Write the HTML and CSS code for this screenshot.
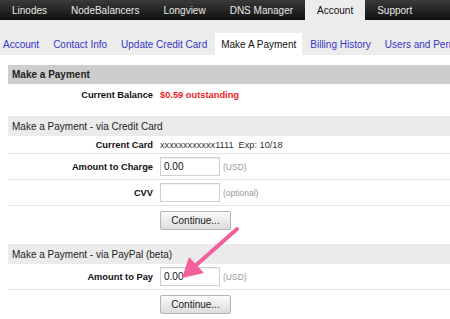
FILE: index.html
```html
<!DOCTYPE html>
<html lang="en">
  <head>
    <meta charset="utf-8" />
    <meta name="viewport" content="width=device-width, initial-scale=1" />
    <title>Make A Payment</title>
    <link rel="stylesheet" href="styles.css">
  </head>
  <body>
    <!-- Main navigation -->
    <nav class="topnav">
      <a class="topnav-item" href="#">Linodes</a>
      <a class="topnav-item" href="#">NodeBalancers</a>
      <a class="topnav-item" href="#">Longview</a>
      <a class="topnav-item" href="#">DNS Manager</a>
      <a class="topnav-item active" href="#">Account</a>
      <a class="topnav-item" href="#">Support</a>
    </nav>

    <!-- Account sub navigation -->
    <nav class="subnav">
      <a class="subnav-item" href="#">Account</a>
      <a class="subnav-item" href="#">Contact Info</a>
      <a class="subnav-item" href="#">Update Credit Card</a>
      <a class="subnav-item active" href="#">Make A Payment</a>
      <a class="subnav-item" href="#">Billing History</a>
      <a class="subnav-item" href="#">Users and Permissions</a>
    </nav>

    <main class="content">
      <section class="panel">
        <h2 class="panel-title main">Make a Payment</h2>
        <div class="row plain balance-row">
          <span class="label">Current Balance</span>
          <span class="balance">$0.59 outstanding</span>
        </div>
      </section>

      <section class="panel">
        <h2 class="panel-title">Make a Payment - via Credit Card</h2>
        <div class="row short">
          <span class="label">Current Card</span>
          <span class="card">xxxxxxxxxxxx1111&nbsp; Exp: 10/18</span>
        </div>
        <div class="row">
          <span class="label">Amount to Charge</span>
          <input class="field" type="text" value="0.00" />
          <span class="hint">(USD)</span>
        </div>
        <div class="row">
          <span class="label">CVV</span>
          <input class="field" type="text" value="" />
          <span class="hint">(optional)</span>
        </div>
        <div class="row plain actions">
          <span class="label"></span>
          <button class="btn" type="button">Continue...</button>
        </div>
      </section>

      <section class="panel">
        <h2 class="panel-title">Make a Payment - via PayPal (beta)</h2>
        <div class="row">
          <span class="label">Amount to Pay</span>
          <input class="field" type="text" value="0.00" />
          <span class="hint">(USD)</span>
        </div>
        <div class="row plain actions">
          <span class="label"></span>
          <button class="btn" type="button">Continue...</button>
        </div>
      </section>
    </main>

    <!-- Annotation arrow -->
    <svg class="annotation" width="450" height="319" viewBox="0 0 450 319">
      <line x1="237" y1="229" x2="194" y2="267" stroke="#f2609c" stroke-width="4" stroke-linecap="round" />
      <polygon points="182,278 189,257 204,273" fill="#f2609c" />
    </svg>
  </body>
</html>
```

FILE: styles.css
```css
:root {
  --font: "Liberation Sans", Arial, Helvetica, sans-serif;
  --link: #3535c8;
  --tab-bg: #ececec;
  --line: #e4e4e4;
}

*,
*::before,
*::after {
  margin: 0;
  padding: 0;
  box-sizing: border-box;
}

body {
  position: relative;
  font-family: var(--font);
  font-size: 10px;
  color: #222;
  background: #fff;
  overflow: hidden;
}

/* top bar */
.topnav {
  display: flex;
  height: 20px;
  background: linear-gradient(#3a3a3a, #101010);
  white-space: nowrap;
}

.topnav-item {
  display: flex;
  align-items: center;
  padding: 0 12px;
  color: #e8e8e8;
  text-decoration: none;
  font-size: 10px;
}

.topnav-item.active {
  background: var(--tab-bg);
  color: #111;
}

/* sub navigation */
.subnav {
  display: flex;
  align-items: flex-end;
  height: 35px;
  margin-left: -4px;
  background: var(--tab-bg);
  white-space: nowrap;
  overflow: hidden;
}

.subnav-item {
  display: flex;
  align-items: center;
  height: 22px;
  padding: 0 7px;
  color: var(--link);
  text-decoration: none;
  font-size: 10px;
}

.subnav-item.active {
  background: #fff;
  color: #111;
  padding: 0 6px;
  margin: 0 1px;
}

/* payment panels */
.content {
  padding: 10px 0 0 8px;
}

.panel {
  margin-bottom: 10px;
}

.panel-title {
  height: 20px;
  padding-left: 4px;
  display: flex;
  align-items: center;
  background: #ebebeb;
  font-size: 10px;
  font-weight: normal;
  color: #222;
}

.panel-title.main {
  height: 19px;
  background: #cdcdcd;
  font-weight: bold;
}

.row {
  display: flex;
  align-items: center;
  height: 26px;
  border-bottom: 1px solid var(--line);
}

.row.short {
  height: 18px;
}

.row.plain {
  border-bottom: none;
}

.row.balance-row {
  height: 22px;
}

.row.actions {
  height: 28px;
}

.label {
  width: 145px;
  margin-right: 7px;
  text-align: right;
  font-weight: bold;
  font-size: 9.3px;
  color: #111;
}

.balance {
  color: #ee1c24;
  font-weight: bold;
  font-size: 9.3px;
}

.card {
  font-size: 9.2px;
  color: #333;
}

.field {
  width: 60px;
  height: 19px;
  padding: 0 3px;
  border: 1px solid #cfcfcf;
  box-shadow: inset 0 1px 1px rgba(0, 0, 0, 0.06);
  font-family: var(--font);
  font-size: 10px;
  color: #111;
  outline: none;
}

.hint {
  margin-left: 3px;
  font-size: 8.5px;
  color: #9a9a9a;
}

.btn {
  width: 71px;
  height: 19px;
  border: 1px solid #b4b4b4;
  border-radius: 2px;
  background: linear-gradient(#fbfbfb, #dcdcdc);
  font-family: var(--font);
  font-size: 10px;
  color: #222;
}

/* overlay arrow */
.annotation {
  position: absolute;
  top: 0;
  left: 0;
  pointer-events: none;
}
```
